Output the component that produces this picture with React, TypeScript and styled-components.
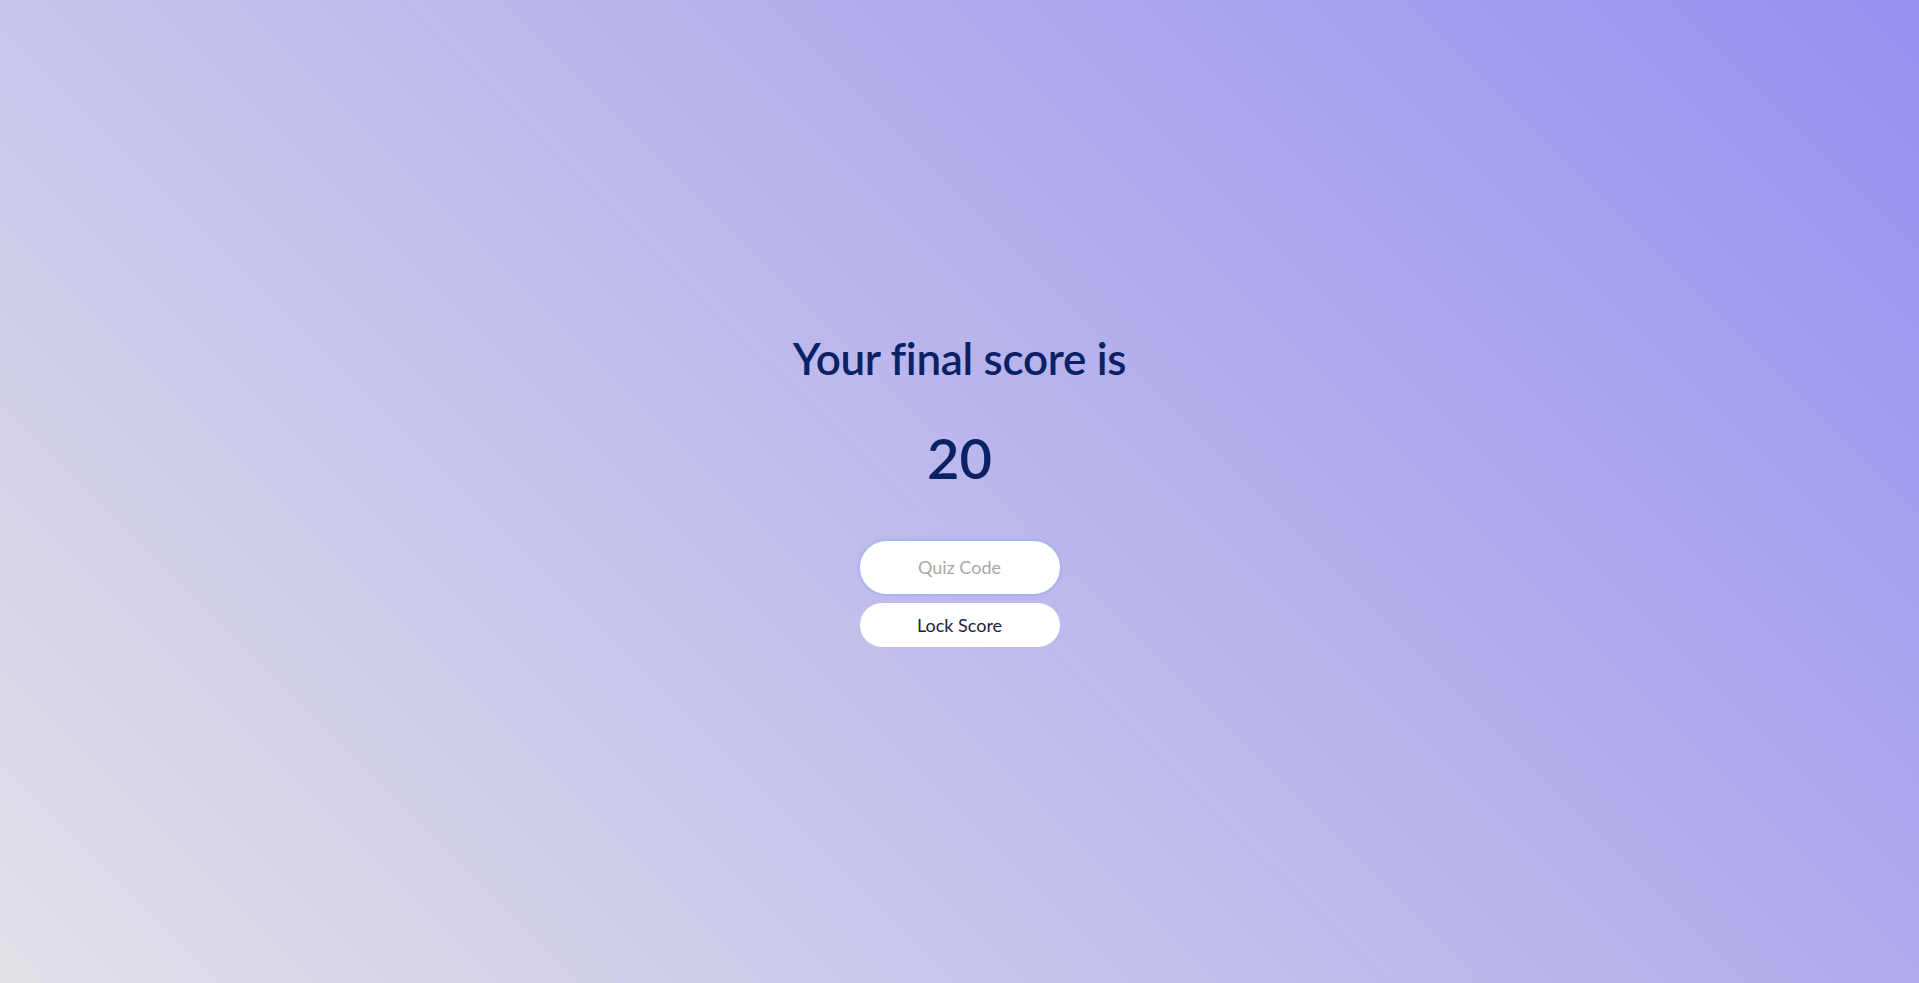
import React, { useState } from "react";
import styled, { createGlobalStyle } from "styled-components";

const GlobalStyle = createGlobalStyle`
  * {
    box-sizing: border-box;
  }
  html,
  body {
    margin: 0;
    padding: 0;
  }
  body {
    font-family: "Lato", "Noto Sans", sans-serif;
  }
`;

const Page = styled.main`
  min-height: 100vh;
  padding-bottom: 5px;
  display: flex;
  flex-direction: column;
  align-items: center;
  justify-content: center;
  background: linear-gradient(45deg, #e1e1e7 0%, #9790f1 100%);
`;

const Heading = styled.h1`
  margin: 0;
  font-size: 44px;
  font-weight: 600;
  color: #0b2165;
  letter-spacing: -0.3px;
`;

const Score = styled.h2`
  margin: 40px 0 50px;
  font-size: 56px;
  font-weight: 600;
  color: #0b2165;
`;

const Form = styled.form`
  display: flex;
  flex-direction: column;
  align-items: center;
  gap: 9px;
`;

const CodeInput = styled.input`
  width: 200px;
  height: 53px;
  border: none;
  border-radius: 27px;
  background: #ffffff;
  text-align: center;
  font: inherit;
  font-size: 18px;
  color: #1a2340;
  outline: none;
  box-shadow: 0 0 4px 1px rgba(150, 170, 240, 0.8);

  &::placeholder {
    color: #a8a8a8;
  }
`;

const LockButton = styled.button`
  width: 200px;
  height: 44px;
  border: none;
  border-radius: 22px;
  background: #ffffff;
  font: inherit;
  font-size: 18px;
  color: #1a2340;
  cursor: pointer;
`;

export default function App() {
  const [code, setCode] = useState("");

  return (
    <>
      <GlobalStyle />
      <Page>
        <Heading>Your final score is</Heading>
        <Score>20</Score>
        <Form onSubmit={e => e.preventDefault()}>
          <CodeInput
            placeholder="Quiz Code"
            value={code}
            onChange={e => setCode(e.target.value)}
          />
          <LockButton type="submit">Lock Score</LockButton>
        </Form>
      </Page>
    </>
  );
}
